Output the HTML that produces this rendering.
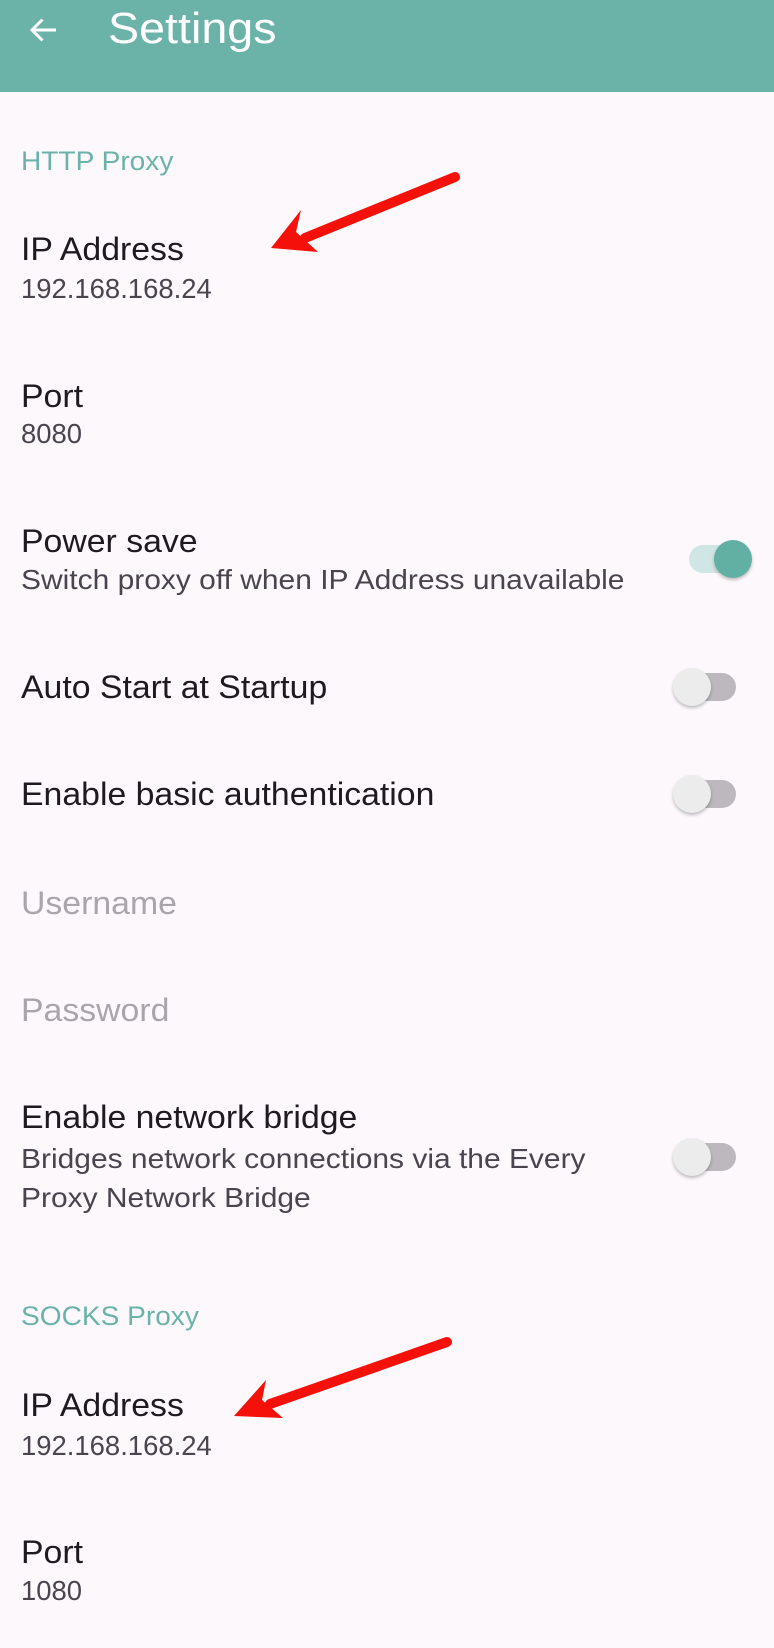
<!DOCTYPE html>
<html><head><meta charset="utf-8"><style>
body{margin:0;width:774px;height:1648px;background:#fcf8fc;font-family:"Liberation Sans",sans-serif;position:relative;overflow:hidden}
.hd{position:absolute;left:0;top:0;width:774px;height:92px;background:#6bb3a9}
.t{position:absolute;left:21px;white-space:nowrap;line-height:40px;height:40px;transform:scaleX(1.04);transform-origin:0 50%}
.h{font-size:32.5px;color:#1d1b20}
.s{font-size:28px;color:#49454f;transform:scaleX(1.07)}
.n{font-size:28px;color:#49454f;transform:scaleX(0.98)}
.c{font-size:27px;color:#6bb3a9}
.g{font-size:32.5px;color:#a9a5ab}
.sw{position:absolute;width:60px;height:28px;border-radius:14px}
.k{position:absolute;width:38px;height:38px;border-radius:50%;top:-5px;box-shadow:0 2px 3px rgba(0,0,0,.25)}
</style></head><body>
<div class="hd">
<svg style="position:absolute;left:26px;top:12px" width="36" height="36" viewBox="0 0 24 24"><path d="M20 12H5M11 5l-7 7 7 7" stroke="#fff" stroke-width="2" fill="none"/></svg>
<div style="position:absolute;left:108px;top:4px;font-size:44px;line-height:50px;color:#fff;transform:scaleX(1.06);transform-origin:0 50%">Settings</div>
</div>
<div class="t c" style="top:141px">HTTP Proxy</div>
<div class="t h" style="top:229px">IP Address</div>
<div class="t n" style="top:269px">192.168.168.24</div>
<div class="t h" style="top:376px">Port</div>
<div class="t n" style="top:414px">8080</div>
<div class="t h" style="top:521px">Power save</div>
<div class="t s" style="top:560px">Switch proxy off when IP Address unavailable</div>
<div class="t h" style="top:667px">Auto Start at Startup</div>
<div class="t h" style="top:774px">Enable basic authentication</div>
<div class="t g" style="top:883px">Username</div>
<div class="t g" style="top:990px">Password</div>
<div class="t h" style="top:1097px">Enable network bridge</div>
<div class="t s" style="top:1139px">Bridges network connections via the Every</div>
<div class="t s" style="top:1178px">Proxy Network Bridge</div>
<div class="t c" style="top:1296px">SOCKS Proxy</div>
<div class="t h" style="top:1385px">IP Address</div>
<div class="t n" style="top:1426px">192.168.168.24</div>
<div class="t h" style="top:1532px">Port</div>
<div class="t n" style="top:1571px">1080</div>

<div class="sw" style="left:689px;top:545px;background:#cfe6e5"><div class="k" style="left:25px;background:#62b0a4"></div></div>
<div class="sw" style="left:676px;top:673px;background:#bdb8be"><div class="k" style="left:-3px;background:#ececec"></div></div>
<div class="sw" style="left:676px;top:780px;background:#bdb8be"><div class="k" style="left:-3px;background:#ececec"></div></div>
<div class="sw" style="left:676px;top:1143px;background:#bdb8be"><div class="k" style="left:-3px;background:#ececec"></div></div>

<svg style="position:absolute;left:0;top:0" width="774" height="1648">
<line x1="455" y1="177" x2="305" y2="238" stroke="#f5110a" stroke-width="10" stroke-linecap="round"/>
<polygon points="271,248 301,210 296,232 318,252" fill="#f5110a"/>
<line x1="447" y1="1342" x2="270" y2="1404" stroke="#f5110a" stroke-width="10" stroke-linecap="round"/>
<polygon points="234,1416 266,1380 262,1400 283,1418" fill="#f5110a"/>
</svg>
</body></html>
